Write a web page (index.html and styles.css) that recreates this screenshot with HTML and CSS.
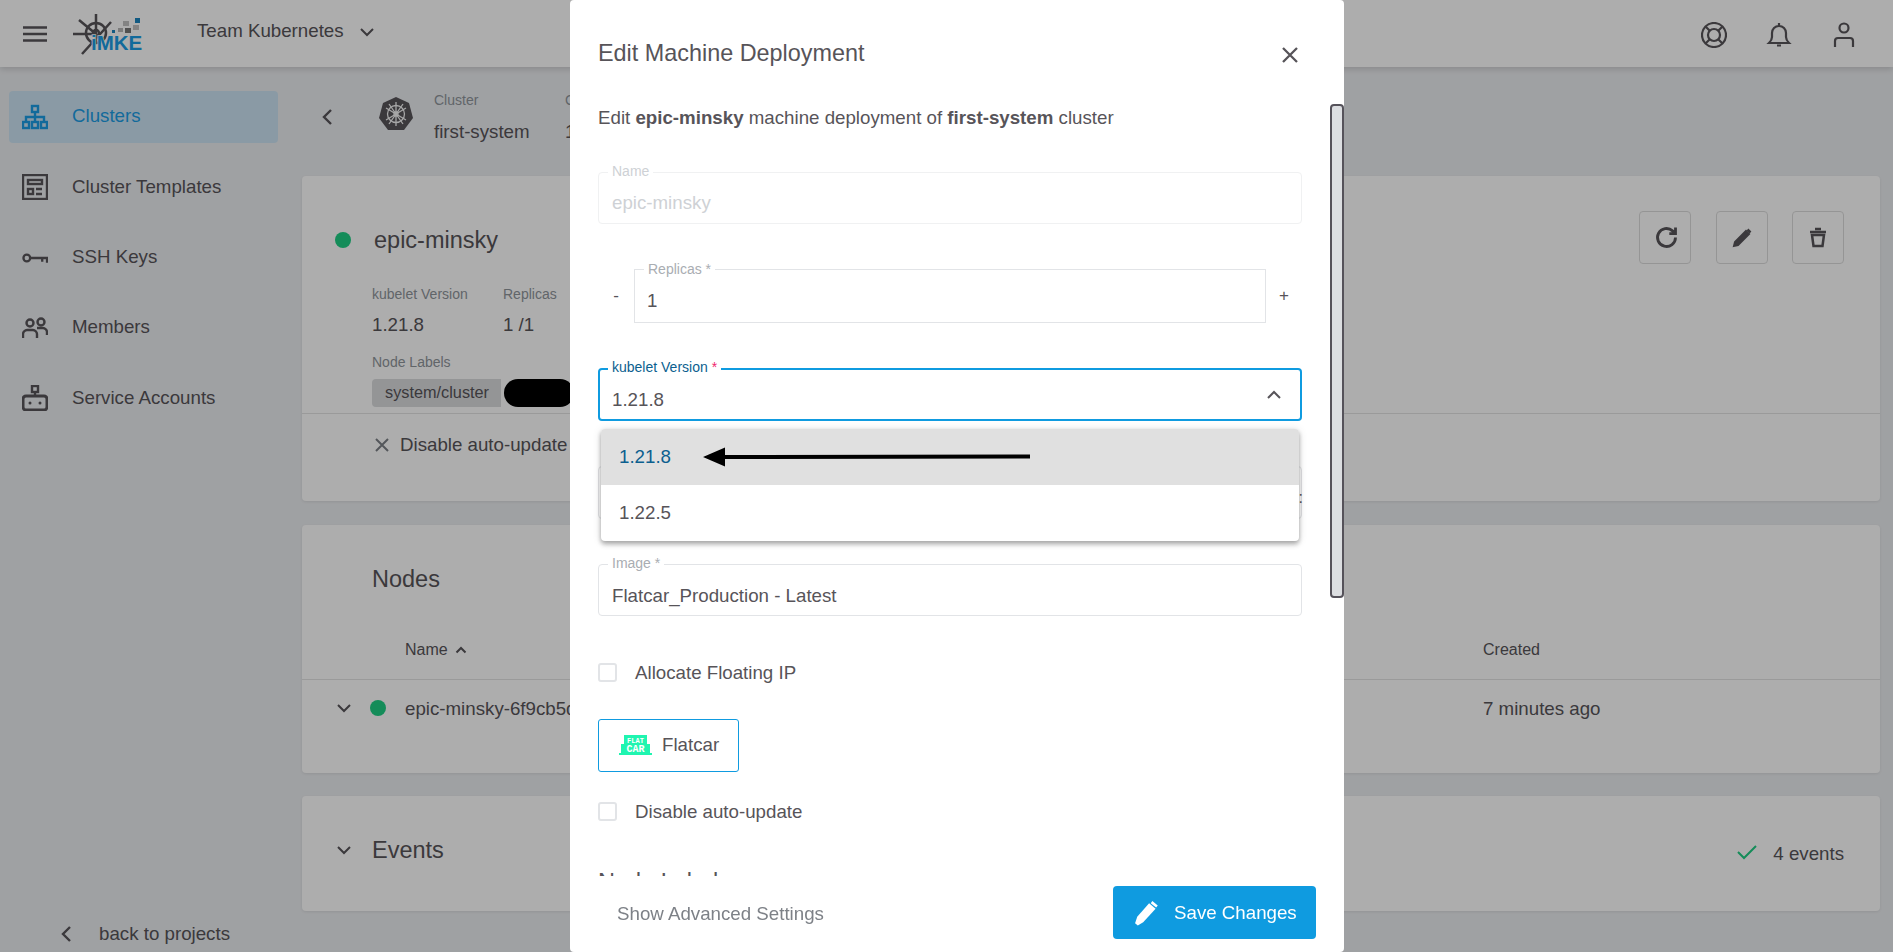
FILE: index.html
```html
<!DOCTYPE html>
<html lang="en">
<head>
    <meta charset="UTF-8">
    <title>Edit Machine Deployment</title>
    <link rel="stylesheet" href="styles.css">
</head>
<body>
    <header class="topbar">
        <svg class="icon menu-icon" viewBox="0 0 24 16"><path d="M0 1.5h24M0 8h24M0 14.500h24"/></svg>
        <svg class="logo" viewBox="0 0 72 44">
            <g class="logo-wheel">
                <circle cx="23" cy="20" r="10"/>
                <circle cx="23" cy="20" r="3"/>
                <path d="M23 1v28M0 21h23M6 7l17 14M38 9L9 41"/>
            </g>
            <g class="logo-pixels">
                <rect x="62" y="5" width="5" height="5" fill="#1b85c0"/>
                <rect x="50" y="8" width="6" height="5" fill="#c2c2c2"/>
                <rect x="60" y="12" width="6" height="5" fill="#c2c2c2"/>
                <rect x="52" y="15" width="6" height="5" fill="#777"/>
                <rect x="45" y="15" width="5" height="4" fill="#b5b5b5"/>
                <rect x="39" y="17" width="3" height="3" fill="#1b85c0"/>
            </g>
            <text x="18" y="37" class="logo-text">iMKE</text>
        </svg>
        <span class="team-name">Team Kubernetes</span>
        <svg class="icon team-chevron" viewBox="0 0 24 24"><path d="M6 9l6 6 6-6"/></svg>
        <div class="topbar-right">
            <svg class="icon top-icon" viewBox="0 0 26 26"><circle cx="13" cy="13" r="12"/><circle cx="13" cy="13" r="6"/><path d="M4.500 4.500l4.300 4.300M21.500 4.500l-4.300 4.300M4.500 21.500l4.300-4.300M21.500 21.500l-4.300-4.300"/></svg>
            <svg class="icon top-icon" viewBox="0 0 26 26"><path d="M3 21c2-2 3-3 3-6v-4c0-4 3-7 7-7s7 3 7 7v4c0 3 1 4 3 6zM13 1v3M11 23.500h4"/></svg>
            <svg class="icon top-icon" viewBox="0 0 26 26"><circle cx="13" cy="6" r="4.500"/><path d="M4 25v-6c0-2 1-3 3-3h12c2 0 3 1 3 3v6"/></svg>
        </div>
    </header>

    <div class="layout">
        <aside class="sidebar">
            <nav class="nav">
                <a class="nav-item active">
                    <svg class="icon nav-icon" viewBox="0 0 26 24"><rect x="10" y="1" width="6" height="6"/><rect x="1" y="17" width="6" height="6"/><rect x="10" y="17" width="6" height="6"/><rect x="19" y="17" width="6" height="6"/><path d="M13 7v10M4 17v-5h18v5"/></svg>
                    <span class="nav-text">Clusters</span>
                </a>
                <a class="nav-item">
                    <svg class="icon nav-icon" viewBox="0 0 26 26"><rect x="1" y="1" width="24" height="24"/><rect x="6" y="6" width="14" height="4"/><rect x="6" y="15" width="5" height="5"/><path d="M14 15h6M14 20h6"/></svg>
                    <span>Cluster Templates</span>
                </a>
                <a class="nav-item">
                    <svg class="icon nav-icon" viewBox="0 0 27 12"><circle cx="5" cy="6" r="3.500"/><path d="M9 6h17v5M21 6v4"/></svg>
                    <span class="nav-text">SSH Keys</span>
                </a>
                <a class="nav-item">
                    <svg class="icon nav-icon" viewBox="0 0 26 22"><circle cx="8" cy="6" r="3.500"/><circle cx="19" cy="5" r="3.500"/><path d="M1 21v-4c0-2 2-4 4-4h6c2 0 4 2 4 4v4M15 11h6c2 0 4 2 4 4v3"/></svg>
                    <span class="nav-text">Members</span>
                </a>
                <a class="nav-item">
                    <svg class="icon nav-icon" viewBox="0 0 26 26"><rect x="10" y="1" width="6" height="6"/><path d="M13 7v4"/><rect x="1" y="11" width="24" height="14" rx="3" class="robot-body"/><circle cx="8" cy="18" r="1.500" class="dot-fill"/><circle cx="18" cy="18" r="1.500" class="dot-fill"/></svg>
                    <span>Service Accounts</span>
                </a>
            </nav>
            <a class="back-link">
                <svg class="icon back-icon" viewBox="0 0 24 24"><path d="M15 5l-7 7 7 7"/></svg>
                back to projects
            </a>
        </aside>

        <main class="main">
            <div class="crumbs">
                <svg class="icon crumb-back" viewBox="0 0 24 24"><path d="M15 5l-7 7 7 7"/></svg>
                <svg class="k8s" viewBox="0 0 34 34">
                    <path class="k8s-shape" d="M17 0l13 6 4 15-9 12H9L0 21 4 6z"/>
                    <g class="k8s-wheel">
                        <circle cx="17" cy="17" r="8.500"/>
                        <circle cx="17" cy="17" r="2"/>
                        <path d="M17 5v24M7 11l20 12M27 11L7 23M10 27L24 7M24 27L10 7"/>
                    </g>
                </svg>
                <div class="crumb crumb-first">
                    <span class="crumb-label">Cluster</span>
                    <span class="crumb-value">first-system</span>
                </div>
                <div class="crumb">
                    <span class="crumb-label">Control Plane</span>
                    <span class="crumb-value">1.21.8</span>
                </div>
            </div>

            <section class="card card-detail">
                <div class="detail-top">
                    <div class="detail-info">
                        <div class="detail-title">
                            <span class="status-dot"></span>
                            <span class="detail-name">epic-minsky</span>
                        </div>
                        <div class="stats">
                            <div class="stat">
                                <span class="stat-label">kubelet Version</span>
                                <span class="stat-value">1.21.8</span>
                            </div>
                            <div class="stat">
                                <span class="stat-label">Replicas</span>
                                <span class="stat-value">1 /1</span>
                            </div>
                        </div>
                        <div class="stat-label labels-title">Node Labels</div>
                        <div class="tags">
                            <span class="tag">system/cluster</span>
                            <span class="redacted"></span>
                        </div>
                    </div>
                    <div class="detail-actions">
                        <button class="square-btn"><svg class="icon refresh-icon" viewBox="0 0 24 24"><path d="M20 12a8 8 0 1 1-2.600-5.900L20 8.500M20 3v5.500h-5.500" class="thick"/></svg></button>
                        <button class="square-btn"><svg class="icon" viewBox="0 0 24 24"><path d="M4 20l1-4L16 5l3 3L8 19z" class="solid"/><path d="M17.500 3.500l3 3" class="thick"/></svg></button>
                        <button class="square-btn"><svg class="icon" viewBox="0 0 24 24"><path d="M4 6h16M9 3h6M6 9l1.500 11h9L18 9z" class="thick"/></svg></button>
                    </div>
                </div>
                <div class="detail-bottom">
                    <svg class="icon x-small" viewBox="0 0 14 14"><path d="M1 1l12 12M13 1L1 13"/></svg>
                    <span>Disable auto-update</span>
                </div>
            </section>

            <section class="card card-nodes">
                <h2 class="card-title nodes-title">Nodes</h2>
                <div class="table-row table-head">
                    <span class="name-col">Name <svg class="icon sort-icon" viewBox="0 0 12 8"><path d="M1.500 6.500L6 2l4.500 4.500"/></svg></span>
                    <span>Created</span>
                </div>
                <div class="table-row table-body">
                    <span class="row-lead">
                        <svg class="icon row-chevron" viewBox="0 0 24 24"><path d="M6 9l6 6 6-6"/></svg>
                        <span class="status-dot"></span>
                    </span>
                    <span class="name-text">epic-minsky-6f9cb5dc8d-x2v7q</span>
                    <span class="age-text">7 minutes ago</span>
                </div>
            </section>

            <section class="card card-events">
                <svg class="icon row-chevron" viewBox="0 0 24 24"><path d="M6 9l6 6 6-6"/></svg>
                <h2 class="card-title">Events</h2>
                <div class="events-count">
                    <svg class="icon check-icon" viewBox="0 0 22 16"><path d="M2 8l6 6L20 2"/></svg>
                    4 events
                </div>
            </section>
        </main>
    </div>

    <div class="overlay"></div>

    <div class="modal">
        <div class="modal-head">
            <h1 class="modal-title">Edit Machine Deployment</h1>
            <svg class="icon close-icon" viewBox="0 0 24 24"><path d="M5 5l14 14M19 5L5 19"/></svg>
        </div>
        <div class="modal-body">
            <p class="modal-desc">Edit <b>epic-minsky</b> machine deployment of <b>first-system</b> cluster</p>

            <div class="field disabled name-field">
                <label>Name</label>
                <span class="field-value">epic-minsky</span>
            </div>

            <div class="replicas-row">
                <span class="step">-</span>
                <div class="field square">
                    <label>Replicas *</label>
                    <span class="field-value">1</span>
                </div>
                <span class="step">+</span>
            </div>

            <div class="field focused">
                <label>kubelet Version <em>*</em></label>
                <span class="field-value">1.21.8</span>
                <svg class="icon select-chevron" viewBox="0 0 24 24"><path d="M6 15l6-6 6 6"/></svg>
                <div class="dropdown">
                    <div class="option selected">
                        1.21.8
                        <svg class="arrow" viewBox="0 0 327 24"><path d="M0 12L22 2.500v7.500L327 9.500v4L22 14v7.500z"/></svg>
                    </div>
                    <div class="option">1.22.5</div>
                </div>
            </div>

            <div class="field hidden-field">
                <span class="field-suffix">:</span>
            </div>

            <div class="field image-field">
                <label>Image *</label>
                <span class="field-value">Flatcar_Production - Latest</span>
            </div>

            <label class="check-row floating-row"><span class="checkbox"></span>Allocate Floating IP</label>

            <div class="os-card">
                <svg class="flatcar" viewBox="0 0 33 21">
                    <rect x="5" y="0" width="23" height="9" fill="#1ff5b0"/>
                    <rect x="2" y="9" width="29" height="9" fill="#1ff5b0"/>
                    <rect x="0" y="18" width="33" height="2" fill="#1ff5b0"/>
                    <text x="16.500" y="7.500" class="flatcar-top">FLAT</text>
                    <text x="16.500" y="16.500" class="flatcar-bottom">CAR</text>
                </svg>
                <span class="os-name">Flatcar</span>
            </div>

            <label class="check-row update-row"><span class="checkbox"></span>Disable auto-update</label>

            <h3 class="labels-heading">Node Labels</h3>
        </div>
        <div class="modal-foot">
            <a class="advanced-link">Show Advanced Settings</a>
            <button class="save-btn">
                <svg class="save-icon" viewBox="0 0 25 24"><path d="M1 21.500l2-6L14 3l6 5L8.500 20.500 3.500 23.500z"/><path d="M17 1l5 4-1.500 2-5-4z"/></svg>
                <span>Save Changes</span>
            </button>
        </div>
        <div class="scrollbar"></div>
    </div>
</body>
</html>
```

FILE: styles.css
```css
* {
    box-sizing: border-box;
}
html, body {
    height: 100%;
}
body {
    margin: 0;
    font-family: "Liberation Sans", Arial, sans-serif;
    font-size: 18.72px;
    color: #575459;
    background: #ebedf0;
    overflow: hidden;
}
.icon {
    display: block;
    fill: none;
    stroke: currentColor;
    stroke-width: 2;
}

/* top bar */
.topbar {
    height: 67px;
    display: flex;
    align-items: center;
    padding-left: 23px;
    background: #fff;
    box-shadow: 0 2px 6px rgba(0, 0, 0, 0.15);
    position: relative;
}
.menu-icon {
    width: 24px;
    height: 16px;
    stroke-width: 2.500;
}
.logo {
    width: 72px;
    height: 44px;
    margin-left: 26px;
    margin-top: 2px;
}
.logo-wheel {
    fill: none;
    stroke: #575459;
    stroke-width: 2.500;
}
.logo-text {
    font-size: 20.500px;
    font-weight: 700;
    fill: #1b9ce5;
    stroke: #fff;
    stroke-width: 1.500;
    paint-order: stroke;
}
.team-name {
    margin-left: 52px;
    margin-top: -5px;
}
.team-chevron {
    width: 24px;
    height: 24px;
    margin-left: 11px;
    margin-top: -4px;
}
.topbar-right {
    margin-left: auto;
    display: flex;
    gap: 39px;
    padding-right: 36px;
    margin-top: 2px;
}
.top-icon {
    width: 26px;
    height: 26px;
    stroke-width: 2.200;
}

/* sidebar */
.layout {
    display: flex;
    height: 885px;
}
.sidebar {
    width: 302px;
    flex: none;
    display: flex;
    flex-direction: column;
    padding: 24px 24px 6px 9px;
}
.nav {
    display: flex;
    flex-direction: column;
    gap: 18.300px;
}
.nav-item {
    height: 52px;
    display: flex;
    align-items: center;
    padding-left: 13px;
    gap: 24px;
    border-radius: 4px;
}
.nav-item.active {
    background: #cce4f3;
    color: #1b9ce5;
}
.nav-text {
    padding-bottom: 2px;
}
.nav-icon {
    width: 26px;
    height: 26px;
    flex: none;
    stroke-width: 2.400;
}
.robot-body {
    stroke-width: 3;
}
.dot-fill {
    fill: currentColor;
    stroke: none;
}
.back-link {
    margin-top: auto;
    display: flex;
    align-items: center;
    padding-left: 46px;
    gap: 20px;
    height: 24px;
}
.back-icon {
    width: 24px;
    height: 24px;
    stroke-width: 2.400;
}

/* main */
.main {
    flex: 1;
    padding-right: 13px;
}
.crumbs {
    height: 109px;
    display: flex;
    align-items: flex-start;
}
.crumb-back {
    width: 24px;
    height: 24px;
    margin: 38px 0 0 14px;
    stroke-width: 2.400;
}
.k8s {
    width: 34px;
    height: 34px;
    flex: none;
    margin: 30px 0 0 39px;
}
.k8s-shape {
    fill: #575459;
}
.k8s-wheel {
    fill: none;
    stroke: #f5f5f5;
    stroke-width: 1.300;
}
.crumb {
    display: flex;
    flex-direction: column;
    gap: 13px;
    margin-top: 25px;
    white-space: nowrap;
}
.crumb-first {
    width: 131px;
    margin-left: 21px;
}
.crumb-label {
    font-size: 14px;
    line-height: 16px;
    color: #8f959b;
}
.crumb-value {
    line-height: 22px;
}
.card {
    background: #fff;
    border-radius: 4px;
    box-shadow: 0 1px 3px rgba(0, 0, 0, 0.08);
}
.card-detail {
    height: 325px;
}
.detail-top {
    height: 238px;
    display: flex;
    justify-content: space-between;
    border-bottom: 1px solid #e3e3e3;
}
.detail-info {
    padding: 49px 0 0 33px;
}
.detail-title {
    display: flex;
    align-items: center;
    height: 30px;
    gap: 23px;
}
.status-dot {
    display: block;
    width: 16px;
    height: 16px;
    border-radius: 50%;
    background: #1ecf84;
}
.detail-name {
    font-size: 23.500px;
}
.stats {
    display: flex;
    margin: 31px 0 0 37px;
}
.stat {
    display: flex;
    flex-direction: column;
    gap: 12px;
    width: 131px;
}
.stat-label {
    font-size: 14px;
    line-height: 16px;
    color: #8f959b;
}
.stat-value {
    line-height: 22px;
}
.labels-title {
    margin: 18px 0 0 37px;
}
.tags {
    display: flex;
    gap: 3px;
    margin: 9px 0 0 37px;
}
.tag {
    width: 129px;
    height: 28px;
    line-height: 27px;
    padding-left: 13px;
    font-size: 16.300px;
    background: #dadcde;
    border-radius: 4px 0 0 4px;
}
.redacted {
    width: 70px;
    height: 28px;
    border-radius: 14px;
    background: #000;
}
.detail-actions {
    display: flex;
    gap: 24.500px;
    padding: 35px 36px 0 0;
}
.square-btn {
    width: 52px;
    height: 53px;
    padding: 0;
    display: flex;
    align-items: center;
    justify-content: center;
    background: none;
    border: 1px solid #dcdcdc;
    border-radius: 4px;
    color: #575459;
}
.square-btn .icon {
    width: 24px;
    height: 24px;
}
.square-btn .refresh-icon {
    width: 27px;
    height: 27px;
    margin-left: 2px;
}
.thick {
    stroke-width: 2.500;
}
.solid {
    fill: currentColor;
}
.detail-bottom {
    display: flex;
    align-items: center;
    height: 62px;
    padding-left: 73px;
    gap: 11px;
}
.x-small {
    width: 14px;
    height: 14px;
    color: #7d8187;
}
.card-nodes {
    height: 248px;
    margin-top: 24px;
}
.card-title {
    margin: 0;
    font-size: 23.500px;
    font-weight: 400;
    line-height: 32px;
}
.nodes-title {
    padding: 38px 0 0 70px;
}
.table-row {
    display: grid;
    grid-template-columns: 103px 1fr 397px;
    align-items: center;
}
.table-head {
    grid-template-columns: 1fr 397px;
    padding: 2px 0 0 103px;
    margin-top: 23px;
    height: 62px;
    font-size: 16px;
    border-bottom: 1px solid #e3e3e3;
}
.name-col {
    display: flex;
    align-items: center;
    gap: 7px;
}
.sort-icon {
    width: 12px;
    height: 8px;
}
.table-body {
    height: 56px;
}
.row-lead {
    display: flex;
    align-items: center;
    padding-left: 30px;
    gap: 14px;
}
.row-chevron {
    width: 24px;
    height: 24px;
    flex: none;
}
.name-text {
    white-space: nowrap;
    padding-top: 2px;
}
.age-text {
    padding-top: 2px;
}
.card-events {
    height: 115px;
    margin-top: 23px;
    display: flex;
    align-items: center;
    padding: 0 36px 8px 30px;
    gap: 16px;
}
.events-count {
    margin-left: auto;
    margin-top: 8px;
    display: flex;
    align-items: center;
    gap: 15px;
}
.check-icon {
    width: 22px;
    height: 16px;
    color: #1ecf84;
    margin-top: -3px;
}

.overlay {
    position: fixed;
    inset: 0;
    background: rgba(0, 0, 0, 0.32);
}

/* modal */
.modal {
    position: fixed;
    left: 570px;
    top: 0;
    width: 774px;
    height: 952px;
    display: flex;
    flex-direction: column;
    background: #fff;
    border-radius: 4px;
}
.modal-head {
    height: 88px;
    flex: none;
    display: flex;
    justify-content: space-between;
    padding: 37px 42px 0 28px;
}
.modal-title {
    margin: 0;
    font-size: 23.400px;
    font-weight: 400;
    line-height: 32px;
}
.close-icon {
    width: 24px;
    height: 24px;
    margin-top: 6px;
    stroke-width: 2.300;
}
.modal-body {
    height: 788px;
    overflow: hidden;
    padding: 0 42px 0 28px;
}
.modal-desc {
    margin: 18px 0 0;
    line-height: 24px;
}
.modal-desc b {
    font-weight: 700;
}
.field {
    position: relative;
    height: 53px;
    padding: 20px 13px 0;
    border: 1px solid #e2e4e7;
    border-radius: 4px;
}
.field label {
    position: absolute;
    left: 9px;
    top: -10px;
    padding: 0 4px;
    font-size: 14px;
    line-height: 16px;
    color: #a9adb2;
    background: #fff;
}
.field-value {
    display: block;
    line-height: 22px;
}
.name-field {
    margin-top: 42px;
    height: 52px;
    padding-top: 19px;
    border-color: #f0f1f2;
}
.disabled label,
.disabled .field-value {
    color: #ced1d5;
}
.replicas-row {
    display: flex;
    align-items: center;
    margin-top: 45px;
    height: 54px;
}
.step {
    width: 36px;
    flex: none;
    text-align: center;
    font-size: 17px;
    margin-top: -1px;
}
.replicas-row .field {
    flex: 1;
    height: 54px;
    padding-left: 12px;
}
.replicas-row .field label {
    left: 9px;
    top: -9px;
}
.square {
    border-radius: 0;
}
.focused {
    margin-top: 45px;
    border: 2px solid #0f9be0;
    padding: 19px 12px 0;
}
.focused label {
    left: 8px;
    top: -11px;
    color: #0c5f8f;
}
.focused em {
    font-style: normal;
    color: #f0266f;
}
.select-chevron {
    position: absolute;
    right: 14px;
    top: 13px;
    width: 24px;
    height: 24px;
}
.dropdown {
    position: absolute;
    left: 1px;
    top: 59px;
    width: 698px;
    border-radius: 4px;
    background: #fff;
    overflow: hidden;
    z-index: 2;
    box-shadow: 0 2px 4px rgba(0, 0, 0, 0.2), 0 4px 5px rgba(0, 0, 0, 0.14), 0 1px 10px rgba(0, 0, 0, 0.12);
}
.option {
    position: relative;
    height: 56px;
    line-height: 56px;
    padding-left: 18px;
}
.option.selected {
    background: #e0e0e0;
    color: #0c5f8f;
}
.arrow {
    position: absolute;
    left: 102px;
    top: 16px;
    width: 327px;
    height: 24px;
    fill: #000;
}
.hidden-field {
    margin-top: 45px;
}
.field-suffix {
    position: absolute;
    right: -2px;
    top: 20px;
    font-size: 16px;
    line-height: 22px;
}
.image-field {
    margin-top: 45px;
    height: 52px;
}
.check-row {
    display: flex;
    align-items: center;
    height: 19px;
    gap: 18px;
}
.checkbox {
    width: 19px;
    height: 19px;
    flex: none;
    border: 2px solid #e2e4e7;
    border-radius: 3px;
}
.floating-row {
    margin-top: 47px;
}
.os-card {
    display: flex;
    align-items: center;
    width: 141px;
    height: 53px;
    margin-top: 37px;
    padding-left: 20px;
    gap: 10px;
    border: 1px solid #0f9be0;
    border-radius: 3px;
}
.os-name {
    margin-top: -2px;
}
.flatcar {
    width: 33px;
    height: 21px;
    flex: none;
}
.flatcar-top,
.flatcar-bottom {
    font-family: "Liberation Mono", monospace;
    font-weight: 700;
    fill: #fff;
    text-anchor: middle;
}
.flatcar-top {
    font-size: 7px;
}
.flatcar-bottom {
    font-size: 10px;
}
.update-row {
    margin-top: 30px;
}
.labels-heading {
    margin: 45px 0 0;
    font-size: 23.500px;
    font-weight: 400;
    line-height: 32px;
}
.modal-foot {
    height: 76px;
    flex: none;
    display: flex;
    justify-content: space-between;
    padding: 10px 28px 0 47px;
}
.advanced-link {
    line-height: 55px;
    color: #7d8187;
}
.save-btn {
    width: 203px;
    height: 53px;
    display: flex;
    align-items: center;
    padding: 1px 0 0 21px;
    gap: 13px;
    font: inherit;
    color: #fff;
    background: #0f9be0;
    border: 0;
    border-radius: 4px;
}
.save-icon {
    width: 27px;
    height: 26px;
    fill: #fff;
    flex: none;
}
.scrollbar {
    position: absolute;
    left: 760px;
    top: 104px;
    width: 14px;
    height: 494px;
    background: #dcdee1;
    border: 2px solid #55525a;
    border-radius: 4px;
}
```
